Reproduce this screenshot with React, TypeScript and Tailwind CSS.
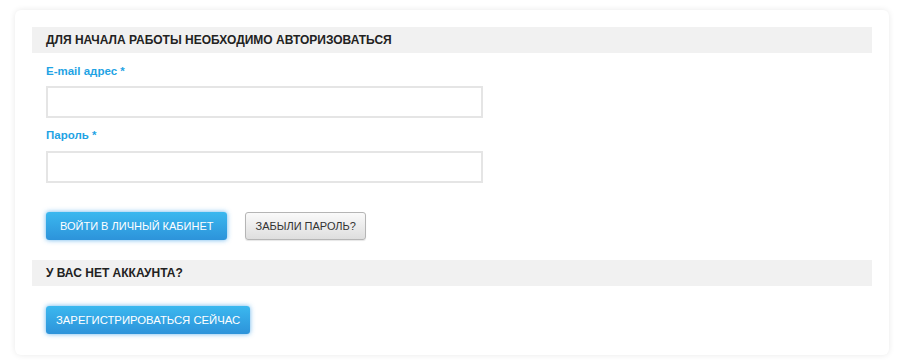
export default function App() {
  return (
    <div className="min-h-[363px] bg-white pt-[10px] pl-[15px] font-['Liberation_Sans',Arial,sans-serif]">
      <div className="w-[874px] rounded-[6px] bg-white px-[17px] pt-[17px] pb-[21px] shadow-[0_0_6px_rgba(0,0,0,0.09)]">
        {/* Login */}
        <div className="flex h-[26px] items-center bg-[#f1f1f1] pl-[14px]">
          <h2 className="text-[12px] font-bold uppercase text-[#222]">
            Для начала работы необходимо авторизоваться
          </h2>
        </div>
        <form className="pl-[14px]">
          <label className="mt-[10px] block text-[11.5px] leading-[16px] font-bold text-[#1fa3e4]">
            E-mail адрес *
          </label>
          <input
            type="text"
            className="mt-[7px] block h-[32px] w-[437px] border-2 border-[#e5e5e5] bg-white outline-none"
          />
          <label className="mt-[9px] block text-[11.5px] leading-[16px] font-bold text-[#1fa3e4]">
            Пароль *
          </label>
          <input
            type="password"
            className="mt-[8px] block h-[32px] w-[437px] border-2 border-[#e5e5e5] bg-white outline-none"
          />
          <div className="mt-[29px] flex items-center gap-[18px]">
            <button
              type="button"
              className="h-[28px] rounded-[3px] bg-gradient-to-b from-[#3bb8ef] to-[#2d93da] px-[14px] text-[11px] uppercase text-white shadow-[0_0_5px_rgba(40,150,230,0.7)]"
            >
              Войти в личный кабинет
            </button>
            <button
              type="button"
              className="h-[28px] rounded-[3px] border border-[#b5b5b5] bg-gradient-to-b from-[#fafafa] to-[#dedede] px-[9px] text-[11px] uppercase text-[#333] shadow-[0_1px_1px_rgba(0,0,0,0.1)]"
            >
              Забыли пароль?
            </button>
          </div>
        </form>

        {/* Register */}
        <div className="mt-[20px] flex h-[26px] items-center bg-[#f1f1f1] pl-[14px]">
          <h2 className="text-[12px] font-bold uppercase text-[#222]">У вас нет аккаунта?</h2>
        </div>
        <div className="mt-[20px] pl-[14px]">
          <button
            type="button"
            className="h-[28px] rounded-[3px] bg-gradient-to-b from-[#3bb8ef] to-[#2d93da] px-[10px] text-[11.3px] uppercase text-white shadow-[0_0_5px_rgba(40,150,230,0.7)]"
          >
            Зарегистрироваться сейчас
          </button>
        </div>
      </div>
    </div>
  );
}
